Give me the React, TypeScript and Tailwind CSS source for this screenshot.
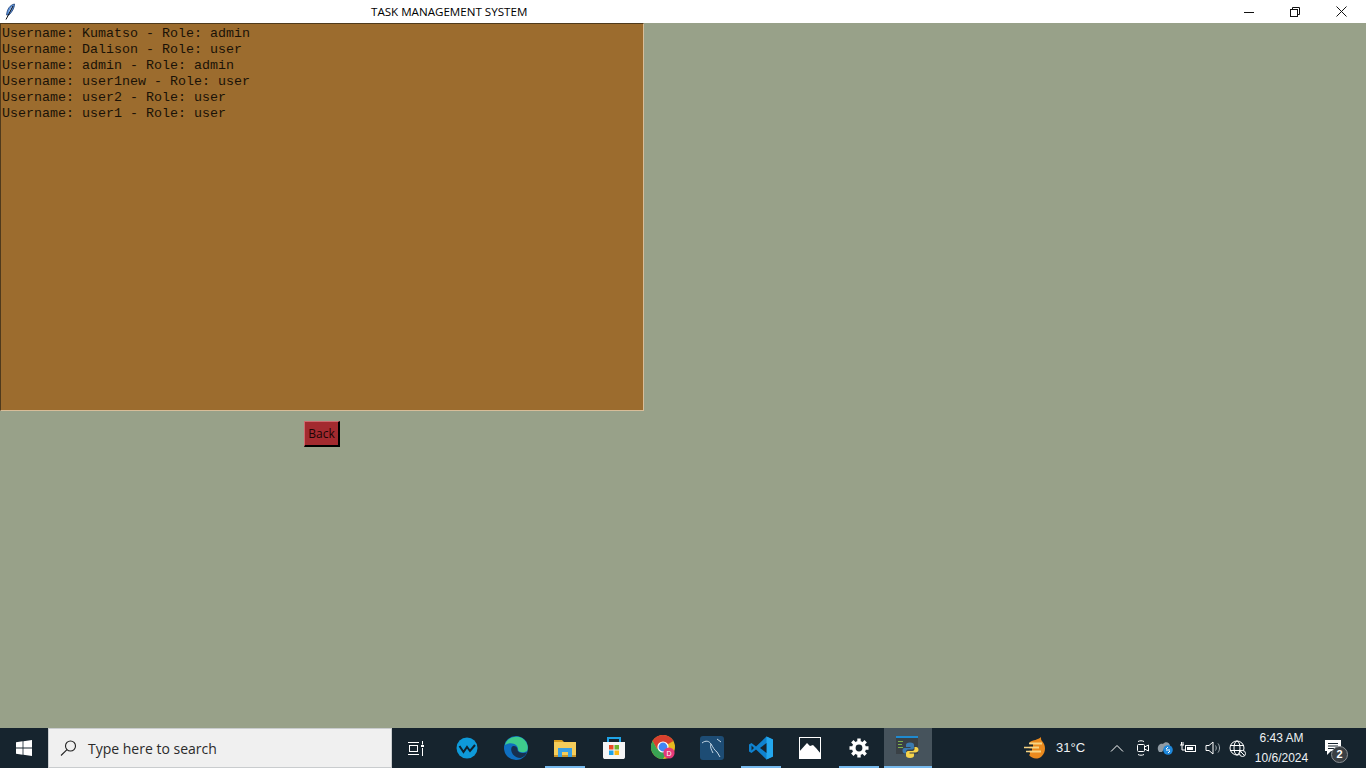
import React from "react";

const users = [
  "Username: Kumatso - Role: admin",
  "Username: Dalison - Role: user",
  "Username: admin - Role: admin",
  "Username: user1new - Role: user",
  "Username: user2 - Role: user",
  "Username: user1 - Role: user",
];

// Taskbar slot, with optional "running" underline
function Slot({ running, active, children }: { running?: boolean; active?: boolean; children: React.ReactNode }) {
  return (
    <div className={"relative flex h-10 shrink-0 items-center justify-center " + (active ? "ml-[1px] w-[48px] bg-[#46535c]" : "w-[49px]")}>
      {children}
      {running && <div className="absolute bottom-0 left-[5px] right-[4px] h-[2px] bg-[#76b9ed]" />}
      {active && <div className="absolute bottom-0 left-0 right-0 h-[2px] bg-[#76b9ed]" />}
    </div>
  );
}

function Feather() {
  return (
    <svg width="12" height="18" viewBox="0 0 12 18">
      <path d="M10.5 1 C6 2 3 6 2.6 12 L5 12 C8 9 10.5 5 10.5 1Z" fill="#5c92dc" stroke="#1c3c70" strokeWidth="0.8" />
      <path d="M8 4 L5 9" stroke="#cfe0f5" strokeWidth="0.8" fill="none" />
      <path d="M9 3 L2 16.5" stroke="#111" strokeWidth="1" fill="none" />
    </svg>
  );
}

function TaskView() {
  return (
    <svg width="16" height="15" viewBox="0 0 16 15" fill="none" stroke="#fff" strokeWidth="1" className="mr-1">
      <path d="M0 1.5H11M0 13.5H11" />
      <rect x="1.5" y="4.5" width="8" height="6" />
      <path d="M14.5 0V3.5M14.5 7V15" />
      <rect x="13" y="4" width="3" height="2" fill="#fff" stroke="none" />
    </svg>
  );
}

function WaveApp() {
  return (
    <svg width="22" height="22" viewBox="0 0 22 22">
      <circle cx="11" cy="11" r="10.5" fill="#0e9ad9" />
      <path d="M3.5 9 L7.5 15 L11 10 L14 14 L19 8" stroke="#10222e" strokeWidth="2" fill="none" />
    </svg>
  );
}

function Edge() {
  return (
    <svg width="24" height="24" viewBox="0 0 24 24">
      <circle cx="12" cy="12" r="12" fill="#0f6fc0" />
      <path d="M1 9 C3 1 12 -1 18 2 C23 5 25 11 23 15 C20 17 14 17 14 13 C14 9 8 5 1 9Z" fill="#3ecb8c" />
      <path d="M23 16 C20 18 13 17 13.5 13 C13 10 9 9 7.5 11.5 C6 16 10 22 16.5 22 C20 21 22 19 23 16Z" fill="#17304f" />
    </svg>
  );
}

function Folder() {
  return (
    <svg width="22" height="18" viewBox="0 0 22 18">
      <path d="M0 1H8L10 3H0Z" fill="#d99d1e" />
      <rect x="0" y="3" width="22" height="15" fill="#f5cd5a" />
      <rect x="0" y="16" width="22" height="2" fill="#c9962a" />
      <path d="M4 9H18V18H14V13H8V18H4Z" fill="#3a9fe3" />
    </svg>
  );
}

function Store() {
  return (
    <svg width="24" height="24" viewBox="0 0 24 24">
      <path d="M6 6V2H18V6" fill="none" stroke="#1fa4e8" strokeWidth="2" />
      <path d="M1 6H23V21C23 22.5 22 23 21 23H3C2 23 1 22.5 1 21Z" fill="#f5f5f5" />
      <rect x="7" y="9" width="4.5" height="4.5" fill="#ea4a25" />
      <rect x="12.5" y="9" width="4.5" height="4.5" fill="#6fb52c" />
      <rect x="7" y="14.5" width="4.5" height="4.5" fill="#1ea2e8" />
      <rect x="12.5" y="14.5" width="4.5" height="4.5" fill="#fdb813" />
    </svg>
  );
}

function Chrome() {
  return (
    <svg width="24" height="24" viewBox="0 0 24 24" className="-mt-[2px] ml-[1px]">
      <circle cx="12" cy="12" r="12" fill="#e8b91f" />
      <path d="M12 12 L22.4 6 A12 12 0 0 0 1.6 6 L6 14Z" fill="#d8402f" />
      <path d="M12 12 L6 14 L1.6 6 A12 12 0 0 0 12 24 L17 16Z" fill="#39a353" />
      <circle cx="12" cy="12" r="5.6" fill="#fff" />
      <circle cx="12" cy="12" r="4.4" fill="#4285f4" />
      <circle cx="18" cy="18" r="5.6" fill="#e5397a" />
      <text x="18" y="20.5" textAnchor="middle" fontSize="7" fill="#fff" fontFamily="'Liberation Sans', sans-serif">D</text>
    </svg>
  );
}

function Workbench() {
  return (
    <svg width="24" height="24" viewBox="0 0 24 24">
      <rect width="24" height="24" rx="3" fill="#1d4c74" />
      <path d="M2 7 C6 4 9 5 11 8 C13 11 14 14 17 16 L20 21 M11 8 C10 11 11 13 13 17 M17 3 L21 6" stroke="#c6d8e6" strokeWidth="1" fill="none" />
    </svg>
  );
}

function VSCode() {
  return (
    <svg width="24" height="24" viewBox="0 0 24 24">
      <path d="M17.5 0.5 L24 3.5 V20.5 L17.5 23.5 L7 13.5 L2.5 17 L0 15.5 V8.5 L2.5 7 L7 10.5Z" fill="#0f82cf" />
      <path d="M17.5 0.5 L24 3.5 V20.5 L17.5 23.5Z" fill="#23a7ee" />
      <path d="M17.5 7 L11 12 L17.5 17Z" fill="#16242e" />
      <path d="M2.5 9.5 L5 12 L2.5 14.5Z" fill="#16242e" />
    </svg>
  );
}

function Photos() {
  return (
    <svg width="22" height="22" viewBox="0 0 22 22">
      <rect x="0.5" y="0.5" width="21" height="21" fill="none" stroke="#fff" />
      <path d="M0 22 V15 L8 6 L11 9 L14 8 L17 11 L22 17 V22Z" fill="#fff" />
    </svg>
  );
}

function Gear() {
  return (
    <svg width="20" height="20" viewBox="0 0 20 20">
      <circle cx="10" cy="10" r="5.2" fill="none" stroke="#fff" strokeWidth="3.6" />
      <g stroke="#fff" strokeWidth="3.4">
        <path d="M10 0.5V4M10 16V19.5M0.5 10H4M16 10H19.5M3.3 3.3L5.7 5.7M14.3 14.3L16.7 16.7M3.3 16.7L5.7 14.3M14.3 5.7L16.7 3.3" />
      </g>
    </svg>
  );
}

function PythonIdle() {
  return (
    <svg width="24" height="24" viewBox="0 0 24 24" className="-mt-[2px]">
      <rect x="0" y="1" width="22" height="18" fill="#3a4146" />
      <rect x="0" y="1" width="22" height="2" fill="#1f8ad0" />
      <path d="M2 6.5H7M2 9.5H6M2 12.5H7" stroke="#7fb24a" strokeWidth="1" />
      <path d="M14 7.5 C11 7.5 10 8.5 10 10 V12 H14.5 V13 H8.5 C7 13 6.5 14.5 6.5 15.5 C6.5 17.5 7.5 18.5 9 18.5 H10 V16.5 C10 15.5 11 14.5 12 14.5 H16 C17 14.5 18 13.5 18 12.5 V10 C18 8.5 17 7.5 14 7.5Z" fill="#3b7ab0" />
      <path d="M14 23 C17 23 18 22 18 20.5 V18.5 H13.5 V17.5 H19.5 C21 17.5 22.5 16.5 22.5 15 C22.5 13 21.5 12 20 12 H18.5 V14 C18.5 15 17.5 16 16.5 16 H12 C11 16 10 17 10 18 V20.5 C10 22 11 23 14 23Z" fill="#f7d44b" />
    </svg>
  );
}

function SystemTray() {
  return (
    <div className="flex h-10 items-center text-white">
      <svg width="22" height="22" viewBox="0 0 22 22" className="mr-[10px]">
        <path d="M6 5 C9 3 14 3 17 0 C17 2 17 3 18 4 C22 8 22 15 18 19 C14 23 8 22 5 18Z" fill="#ea8a1e" />
        <path d="M5 6.5H18M0 10.5H15M2 14.5H17" stroke="#f8d583" strokeWidth="2" />
        <path d="M0 8.5H9M0 12.5H8M0 16.5H6" stroke="#16242e" strokeWidth="2" />
      </svg>
      <span className="w-[51px] text-[13px] text-[#eef1f3]">31°C</span>
      <svg width="14" height="8" viewBox="0 0 14 8" fill="none" stroke="#fff" className="ml-[3px] mr-[12px]"><path d="M1 7.5L7 1.5L13 7.5" /></svg>
      <svg width="14" height="16" viewBox="0 0 14 16" fill="none" stroke="#fff" className="mr-[6px]">
        <rect x="1.5" y="4.5" width="7" height="7" rx="1" /><path d="M8.5 7L12.5 5V11L8.5 9M2 1.5C4 0.5 6 0.5 8 1.5M2 14.5C4 15.5 6 15.5 8 14.5" />
      </svg>
      <svg width="18" height="14" viewBox="0 0 18 14" className="mr-[6px]">
        <path d="M2 9C1 5 4 2 7 3C9 0 14 1 14 5H10L6 11H3Z" fill="#8f9aa3" />
        <circle cx="12" cy="9" r="4.8" fill="#1e88dc" /><path d="M10 9H14M10 8L12 6M14 10L12 12" stroke="#fff" strokeWidth="1" />
      </svg>
      <svg width="16" height="12" viewBox="0 0 16 12" fill="none" stroke="#fff" className="mr-[9px]">
        <rect x="5.5" y="3.5" width="10" height="6" /><rect x="7" y="5" width="6" height="3" fill="#fff" stroke="none" /><path d="M0 3H4M1.5 0V3M3 0V3M2 3V8H5" />
      </svg>
      <svg width="16" height="14" viewBox="0 0 16 14" fill="none" stroke="#fff" className="mr-[8px]">
        <path d="M1 4.5H4L8 1V13L4 9.5H1Z" /><path d="M10.5 4.5C11.5 6 11.5 8 10.5 9.5M13 2.5C15 5 15 9 13 11.5" stroke="#aab3b9" />
      </svg>
      <svg width="17" height="17" viewBox="0 0 17 17" fill="none" stroke="#fff" className="mr-[7px]">
        <circle cx="8" cy="8" r="7" /><ellipse cx="8" cy="8" rx="3" ry="7" /><path d="M1 5.5H15M1 10.5H15" />
        <circle cx="13.5" cy="13.5" r="3" fill="#16242e" /><path d="M11.5 11.5L15.5 15.5" />
      </svg>
      <div className="flex w-[57px] flex-col items-center text-[12px] leading-[20px] text-[#eef1f3]">
        <span className="whitespace-nowrap">6:43 AM</span>
        <span className="whitespace-nowrap">10/6/2024</span>
      </div>
      <div className="relative ml-[15px] h-10 w-[32px]">
        <svg width="17" height="16" viewBox="0 0 17 16" className="absolute left-0 top-[12px]">
          <path d="M0 0H16V11H6L2 15V11H0Z" fill="#fff" /><path d="M3 3.5H13M3 6H13M3 8.5H9" stroke="#16242e" />
        </svg>
        <div className="absolute left-[6px] top-[18px] flex h-[17px] w-[17px] items-center justify-center rounded-full border border-[#8a8f93] bg-[#3a3f43] text-[11px] font-bold text-white">2</div>
      </div>
    </div>
  );
}

export default function App() {
  return (
    <div className="flex h-[768px] w-[1366px] flex-col overflow-hidden bg-[#98a189] font-['Liberation_Sans',sans-serif]">
      {/* Window title bar */}
      <div className="relative flex h-[23px] shrink-0 items-center bg-white">
        <div className="ml-[4px] flex h-[23px] w-[14px] items-center"><Feather /></div>
        <span className="ml-[353px] font-['Open_Sans',sans-serif] text-[11.6px] text-black">TASK MANAGEMENT SYSTEM</span>
        <div className="ml-auto flex h-[23px] items-center">
          <svg width="10" height="10" viewBox="0 0 10 10" className="mr-[36px]"><path d="M0 5.5H10" stroke="#111" /></svg>
          <svg width="10" height="10" viewBox="0 0 10 10" fill="none" stroke="#111" className="mr-[36px]"><rect x="0.5" y="2.5" width="7" height="7" /><path d="M2.5 2.5V0.5H9.5V7.5H7.5" /></svg>
          <svg width="11" height="11" viewBox="0 0 11 11" stroke="#111" className="mr-[19px]"><path d="M0.5 0.5L10.5 10.5M10.5 0.5L0.5 10.5" /></svg>
        </div>
      </div>

      {/* Main content */}
      <div className="flex min-h-0 flex-1 flex-col items-start">
        <div className="h-[388px] w-[644px] border border-b-[#d8bd98] border-l-[#4f3a1c] border-r-[#d8bd98] border-t-[#4f3a1c] bg-[#9c6c2e] pl-[1px] pt-[2px] font-['Liberation_Mono',monospace] text-[13.33px] leading-[16px] text-[#1a1207]">
          {users.map((u) => (
            <div key={u} className="whitespace-pre">{u}</div>
          ))}
        </div>
        <button className="ml-[304px] mt-[10px] flex h-[26px] w-[36px] items-center justify-center border border-b-2 border-r-2 border-b-black border-l-[#cf6a6e] border-r-black border-t-[#cf6a6e] bg-[#a32a2f] font-['Open_Sans',sans-serif] text-[12px] text-[#1a0505]">
          Back
        </button>
      </div>

      {/* Windows taskbar */}
      <div className="flex h-10 shrink-0 items-center bg-[#16242e]">
        <div className="flex h-10 w-[48px] items-center justify-center">
          <svg width="16" height="16" viewBox="0 0 16 16" fill="#fff">
            <path d="M0 2.2L6.6 1.3V7.6H0ZM7.4 1.2L16 0V7.6H7.4ZM0 8.4H6.6V14.7L0 13.8ZM7.4 8.4H16V16L7.4 14.8Z" />
          </svg>
        </div>
        <div className="flex h-10 w-[344px] items-center border border-[#c9ccce] bg-[#f0f0f0] pl-[11px]">
          <svg width="17" height="16" viewBox="0 0 17 16" fill="none" stroke="#222" strokeWidth="1.1">
            <circle cx="10.5" cy="6" r="5" /><path d="M7 9.7L1 15.5" />
          </svg>
          <span className="ml-[11px] font-['Open_Sans',sans-serif] text-[14px] text-[#2b2b2b]">Type here to search</span>
        </div>
        <div className="flex h-10 items-center pl-[1px]">
          <Slot><TaskView /></Slot>
          <Slot><WaveApp /></Slot>
          <Slot><Edge /></Slot>
          <Slot running><Folder /></Slot>
          <Slot><Store /></Slot>
          <Slot><Chrome /></Slot>
          <Slot><Workbench /></Slot>
          <Slot running><VSCode /></Slot>
          <Slot><Photos /></Slot>
          <Slot running><Gear /></Slot>
          <Slot active><PythonIdle /></Slot>
        </div>
        <div className="ml-auto pr-[9px]"><SystemTray /></div>
      </div>
    </div>
  );
}
